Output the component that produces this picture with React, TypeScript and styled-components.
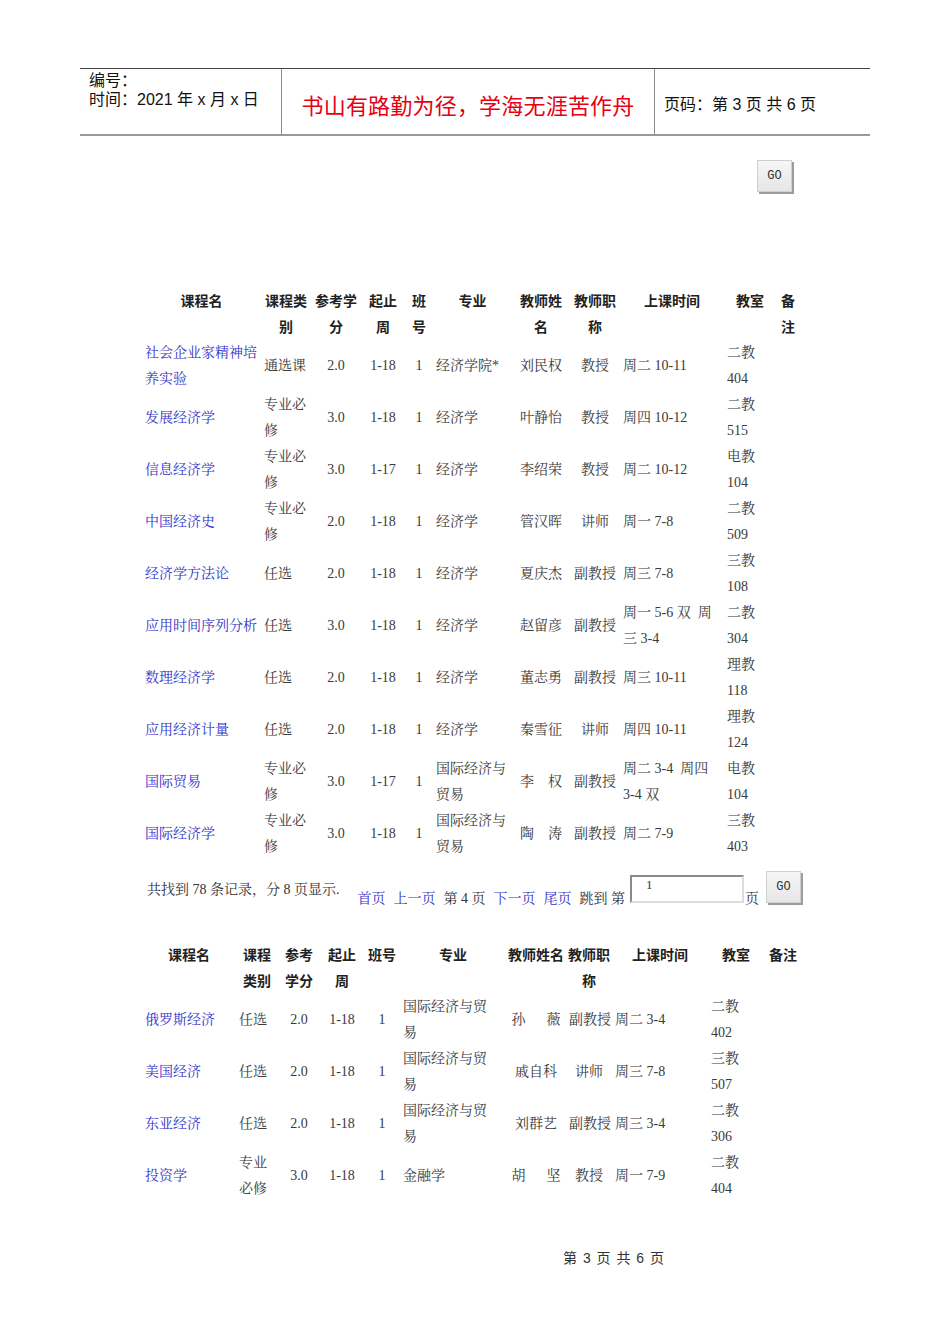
import React from "react";
import styled, { createGlobalStyle } from "styled-components";

const GlobalStyle = createGlobalStyle`
  html, body { margin: 0; padding: 0; background: #fff; }
  body {
    width: 950px;
    font-family: "Liberation Serif", "Noto Serif CJK SC", "Noto Sans CJK SC", serif;
    color: #333;
  }
`;

const SANS = `"Liberation Sans", "Noto Sans CJK SC", sans-serif`;
const BODY = `"Liberation Serif", "Noto Serif CJK SC", "Noto Sans CJK SC", serif`;

const Page = styled.div`
  width: 950px;
  padding-top: 68px;
  box-sizing: border-box;
`;

const HeaderBar = styled.header`
  margin: 0 80px;
  height: 68px;
  box-sizing: border-box;
  border-top: 1px solid #444;
  border-bottom: 2px solid #9a9a9a;
  display: grid;
  grid-template-columns: 201px 373px 1fr;
  font-family: ${SANS};
`;

const HeaderCell = styled.div<{ $divider?: boolean }>`
  border-left: ${(p) => (p.$divider ? "1px solid #8a8a8a" : "none")};
  display: flex;
`;

const MetaLines = styled.div`
  padding: 2px 0 0 9px;
  font-size: 16px;
  line-height: 19px;
  color: #111;
`;

const Motto = styled.div`
  flex: 1;
  display: flex;
  align-items: center;
  justify-content: center;
  padding-top: 5px;
  font-size: 22px;
  color: #e60012;
  letter-spacing: 0.2px;
`;

const PageNo = styled.div`
  display: flex;
  align-items: center;
  padding: 2px 0 0 9px;
  font-size: 16px;
  color: #111;
`;

const GoRow = styled.div`
  display: flex;
  justify-content: flex-end;
  padding-right: 158px;
  margin-top: 24px;
`;

const GoButton = styled.button`
  width: 35px;
  height: 32px;
  box-sizing: border-box;
  padding: 0;
  background: linear-gradient(#f6f6f6, #e6e6e6);
  border: 1px solid #d0d0d0;
  box-shadow: 2px 2px 0 #9c9c9c;
  font-family: "Liberation Mono", "DejaVu Sans Mono", monospace;
  font-size: 12px;
  color: #333;
  cursor: pointer;
`;

const Table = styled.table<{ $left: number; $top: number }>`
  margin-left: ${(p) => p.$left}px;
  margin-top: ${(p) => p.$top}px;
  border-collapse: collapse;
  table-layout: fixed;
  font-family: ${BODY};
  font-size: 14px;
`;

const HeadCell = styled.th`
  padding: 0 2px;
  vertical-align: top;
  text-align: center;
  font-family: ${SANS};
  font-weight: bold;
  color: #222;
  line-height: 26px;
  height: 52px;
  box-sizing: border-box;
  white-space: pre-line;
`;

const Cell = styled.td<{ $align: string }>`
  padding: 0 3px;
  vertical-align: middle;
  text-align: ${(p) => p.$align};
  line-height: 26px;
  height: 52px;
  box-sizing: border-box;
  white-space: pre;
  color: #3a3a3a;
`;

const CourseLink = styled.a`
  color: #3535c8;
  text-decoration: none;
`;

const Pager = styled.div`
  display: flex;
  align-items: stretch;
  margin: 11px 0 0 147px;
  height: 32px;
  font-family: ${BODY};
  font-size: 14px;
  color: #333;
`;

const Summary = styled.span`
  align-self: center;
  margin-top: 2px;
`;

const PagerNav = styled.div`
  display: flex;
  align-items: flex-end;
  margin-left: 18px;
`;

const NavItem = styled.span<{ $link?: boolean }>`
  color: ${(p) => (p.$link ? "#3535c8" : "#333")};
  line-height: 18px;
  margin-right: 8px;
  margin-bottom: -5px;
`;

const PageInput = styled.input`
  width: 114px;
  height: 28px;
  box-sizing: border-box;
  margin: 4px 1px 0 -3px;
  padding: 0 14px 9px;
  border: 2px solid;
  border-color: #8a8a8a #dcdcdc #dcdcdc #8a8a8a;
  font-family: ${BODY};
  font-size: 13px;
  color: #333;
  align-self: flex-start;
`;

const PagerGo = styled.div`
  margin-left: -1px;
  align-self: flex-start;
`;

const Footer = styled.div`
  margin-top: 46px;
  padding-left: 563px;
  font-family: ${SANS};
  font-size: 14px;
  line-height: 20px;
  color: #333;
  word-spacing: 2px;
`;

type Col = { head: string; width: number; align: string };

const cols1: Col[] = [
  { head: "课程名", width: 119, align: "left" },
  { head: "课程类\n别", width: 50, align: "left" },
  { head: "参考学\n分", width: 50, align: "center" },
  { head: "起止\n周", width: 44, align: "center" },
  { head: "班\n号", width: 28, align: "center" },
  { head: "专业", width: 79, align: "left" },
  { head: "教师姓\n名", width: 58, align: "center" },
  { head: "教师职\n称", width: 50, align: "center" },
  { head: "上课时间", width: 104, align: "left" },
  { head: "教室", width: 52, align: "left" },
  { head: "备\n注", width: 24, align: "left" },
];

const rows1: string[][] = [
  ["社会企业家精神培\n养实验", "通选课", "2.0", "1-18", "1", "经济学院*", "刘民权", "教授", "周二 10-11", "二教\n404", ""],
  ["发展经济学", "专业必\n修", "3.0", "1-18", "1", "经济学", "叶静怡", "教授", "周四 10-12", "二教\n515", ""],
  ["信息经济学", "专业必\n修", "3.0", "1-17", "1", "经济学", "李绍荣", "教授", "周二 10-12", "电教\n104", ""],
  ["中国经济史", "专业必\n修", "2.0", "1-18", "1", "经济学", "管汉晖", "讲师", "周一 7-8", "二教\n509", ""],
  ["经济学方法论", "任选", "2.0", "1-18", "1", "经济学", "夏庆杰", "副教授", "周三 7-8", "三教\n108", ""],
  ["应用时间序列分析", "任选", "3.0", "1-18", "1", "经济学", "赵留彦", "副教授", "周一 5-6 双  周\n三 3-4", "二教\n304", ""],
  ["数理经济学", "任选", "2.0", "1-18", "1", "经济学", "董志勇", "副教授", "周三 10-11", "理教\n118", ""],
  ["应用经济计量", "任选", "2.0", "1-18", "1", "经济学", "秦雪征", "讲师", "周四 10-11", "理教\n124", ""],
  ["国际贸易", "专业必\n修", "3.0", "1-17", "1", "国际经济与\n贸易", "李\u3000权", "副教授", "周二 3-4  周四\n3-4 双", "电教\n104", ""],
  ["国际经济学", "专业必\n修", "3.0", "1-18", "1", "国际经济与\n贸易", "陶\u3000涛", "副教授", "周二 7-9", "三教\n403", ""],
];

const cols2: Col[] = [
  { head: "课程名", width: 94, align: "left" },
  { head: "课程\n类别", width: 42, align: "left" },
  { head: "参考\n学分", width: 42, align: "center" },
  { head: "起止\n周", width: 44, align: "center" },
  { head: "班号", width: 36, align: "center" },
  { head: "专业", width: 106, align: "left" },
  { head: "教师姓名", width: 60, align: "center" },
  { head: "教师职\n称", width: 46, align: "center" },
  { head: "上课时间", width: 96, align: "left" },
  { head: "教室", width: 56, align: "left" },
  { head: "备注", width: 38, align: "left" },
];

const rows2: string[][] = [
  ["俄罗斯经济", "任选", "2.0", "1-18", "1", "国际经济与贸\n易", "孙\u3000\u00a0\u00a0薇", "副教授", "周二 3-4", "二教\n402", ""],
  ["美国经济", "任选", "2.0", "1-18", "1", "国际经济与贸\n易", "戚自科", "讲师", "周三 7-8", "三教\n507", ""],
  ["东亚经济", "任选", "2.0", "1-18", "1", "国际经济与贸\n易", "刘群艺", "副教授", "周三 3-4", "二教\n306", ""],
  ["投资学", "专业\n必修", "3.0", "1-18", "1", "金融学", "胡\u3000\u00a0\u00a0坚", "教授", "周一 7-9", "二教\n404", ""],
];

function CourseTable({ cols, rows, left, top }: { cols: Col[]; rows: string[][]; left: number; top: number }) {
  const width = cols.reduce((s, c) => s + c.width, 0);
  return (
    <Table $left={left} $top={top} style={{ width }}>
      <colgroup>
        {cols.map((c, i) => (
          <col key={i} style={{ width: c.width }} />
        ))}
      </colgroup>
      <thead>
        <tr>
          {cols.map((c, i) => (
            <HeadCell key={i}>{c.head}</HeadCell>
          ))}
        </tr>
      </thead>
      <tbody>
        {rows.map((r, ri) => (
          <tr key={ri}>
            {r.map((v, ci) => (
              <Cell key={ci} $align={cols[ci].align}>
                {ci === 0 ? <CourseLink href="#">{v}</CourseLink> : v}
              </Cell>
            ))}
          </tr>
        ))}
      </tbody>
    </Table>
  );
}

export default function App() {
  return (
    <>
      <GlobalStyle />
      <Page>
        <HeaderBar>
          <HeaderCell>
            <MetaLines>
              <div>编号：</div>
              <div>时间：2021 年 x 月 x 日</div>
            </MetaLines>
          </HeaderCell>
          <HeaderCell $divider>
            <Motto>书山有路勤为径，学海无涯苦作舟</Motto>
          </HeaderCell>
          <HeaderCell $divider>
            <PageNo>页码：第 3 页&nbsp;共 6 页</PageNo>
          </HeaderCell>
        </HeaderBar>

        <GoRow>
          <GoButton>GO</GoButton>
        </GoRow>

        <CourseTable cols={cols1} rows={rows1} left={142} top={96} />

        <Pager>
          <Summary>共找到 78 条记录，分 8 页显示.</Summary>
          <PagerNav>
            <NavItem $link>首页</NavItem>
            <NavItem $link>上一页</NavItem>
            <NavItem>第 4 页</NavItem>
            <NavItem $link>下一页</NavItem>
            <NavItem $link>尾页</NavItem>
            <NavItem>跳到 第</NavItem>
            <PageInput defaultValue="1" />
            <NavItem>页</NavItem>
            <PagerGo>
              <GoButton>GO</GoButton>
            </PagerGo>
          </PagerNav>
        </Pager>

        <CourseTable cols={cols2} rows={rows2} left={142} top={39} />

        <Footer>第 3 页 共 6 页</Footer>
      </Page>
    </>
  );
}
